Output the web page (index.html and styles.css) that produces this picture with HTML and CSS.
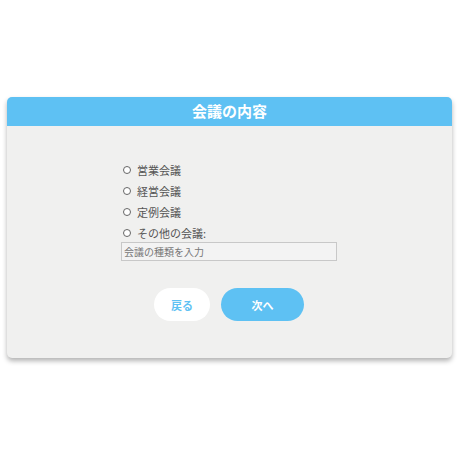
FILE: index.html
```html
<!DOCTYPE html>
<html lang="ja">
<head>
<meta charset="utf-8">
<link rel="stylesheet" href="styles.css">
</head>
<body>
<div class="card">
  <div class="card-header">会議の内容</div>
  <div class="card-body">
    <div class="options">
      <label class="option"><span class="radio"></span>営業会議</label>
      <label class="option"><span class="radio"></span>経営会議</label>
      <label class="option"><span class="radio"></span>定例会議</label>
      <label class="option"><span class="radio"></span>その他の会議:</label>
      <div class="text-input">会議の種類を入力</div>
    </div>
    <div class="buttons">
      <div class="btn btn-back">戻る</div>
      <div class="btn btn-next">次へ</div>
    </div>
  </div>
</div>
</body>
</html>
```
FILE: styles.css
```css
html, body {
  margin: 0;
  padding: 0;
  background: #ffffff;
  font-family: "Noto Sans CJK JP", "Noto Sans", sans-serif;
}
body {
  padding: 97px 8px 0 7px;
  width: 460px;
  height: 460px;
  box-sizing: border-box;
}
.card {
  width: 445px;
  height: 261px;
  border-radius: 5px;
  overflow: hidden;
  background: #f0f0ef;
  box-shadow: 0 3px 5px rgba(0, 0, 0, 0.3);
  display: flex;
  flex-direction: column;
}
.card-header {
  height: 29px;
  background: #5ec1f3;
  color: #ffffff;
  font-weight: 700;
  font-size: 15px;
  line-height: 28px;
  text-align: center;
}
.card-body {
  flex: 1;
  display: flex;
  flex-direction: column;
  padding: 33px 0 0 114px;
}
.options {
  display: flex;
  flex-direction: column;
  width: 216px;
}
.option {
  display: flex;
  align-items: center;
  height: 21px;
  font-size: 11px;
  color: #555555;
  padding-left: 2px;
}
.radio {
  width: 6px;
  height: 6px;
  border: 1px solid #666666;
  border-radius: 50%;
  background: #ffffff;
  margin-right: 6px;
}
.text-input {
  height: 17px;
  border: 1px solid #c8c8c8;
  background: #f3f3f3;
  font-size: 10px;
  line-height: 17px;
  color: #777777;
  padding-left: 2px;
  margin-top: -1px;
}
.buttons {
  display: flex;
  gap: 11px;
  margin-top: 27px;
  margin-left: 33px;
}
.btn {
  height: 33px;
  border-radius: 17px;
  font-size: 11px;
  font-weight: 700;
  display: flex;
  align-items: center;
  justify-content: center;
}
.btn-back {
  width: 56px;
  background: #ffffff;
  color: #5ec1f3;
}
.btn-next {
  width: 83px;
  background: #5ec1f3;
  color: #ffffff;
}
```
